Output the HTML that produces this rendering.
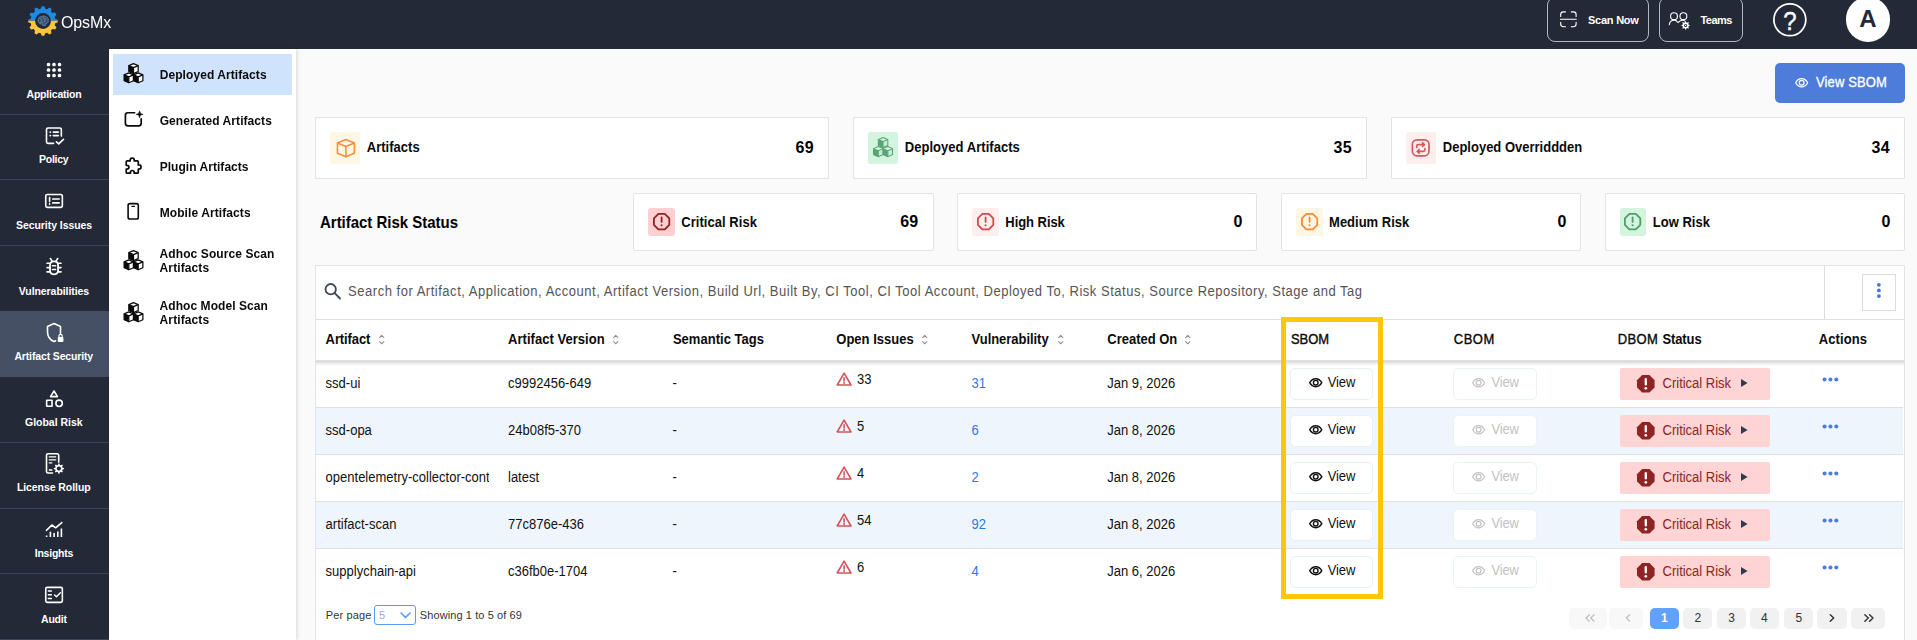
<!DOCTYPE html>
<html lang="en">
<head>
<meta charset="utf-8">
<title>OpsMx - Deployed Artifacts</title>
<style>
*{box-sizing:border-box;margin:0;padding:0}
html,body{width:1917px;height:640px;overflow:hidden}
body{background:#fafafa;font-family:"Liberation Sans", Arial, sans-serif;position:relative}
.b,.t,.ic{position:absolute;display:block}
.t{line-height:30px;white-space:pre}
.ic{overflow:visible}
#hdr{position:absolute;left:0;top:0;width:1917px;height:49px;background:#242937;overflow:hidden}
#nav{position:absolute;left:0;top:0;width:109px;height:640px}
#nav:before{content:"";position:absolute;left:0;top:49px;width:109px;height:591px;background:#242937}
#side{position:absolute;left:0;top:0;width:0;height:0}
#side:before{content:"";position:absolute;left:109px;top:49px;width:187px;height:591px;background:#fff;box-shadow:1px 0 4px rgba(0,0,0,.14)}
#main{position:absolute;left:0;top:0;width:0;height:0}
</style>
</head>
<body>
<header id="hdr">
<svg class="ic" style="left:26.6px;top:5.1px" width="32" height="32" viewBox="0 0 32 32" >
<defs>
<clipPath id="gt">
<rect x="0" y="0" width="32" height="15.7"/>
</clipPath>
<clipPath id="gb">
<rect x="0" y="15.7" width="32" height="17"/>
</clipPath>
</defs>
<path d="M13.75 3.81 L14.70 1.21 L17.30 1.21 L18.25 3.81 L20.15 4.32 L22.27 2.54 L24.53 3.84 L24.04 6.56 L25.44 7.96 L28.16 7.47 L29.46 9.73 L27.68 11.85 L28.19 13.75 L30.79 14.70 L30.79 17.30 L28.19 18.25 L27.68 20.15 L29.46 22.27 L28.16 24.53 L25.44 24.04 L24.04 25.44 L24.53 28.16 L22.27 29.46 L20.15 27.68 L18.25 28.19 L17.30 30.79 L14.70 30.79 L13.75 28.19 L11.85 27.68 L9.73 29.46 L7.47 28.16 L7.96 25.44 L6.56 24.04 L3.84 24.53 L2.54 22.27 L4.32 20.15 L3.81 18.25 L1.21 17.30 L1.21 14.70 L3.81 13.75 L4.32 11.85 L2.54 9.73 L3.84 7.47 L6.56 7.96 L7.96 6.56 L7.47 3.84 L9.73 2.54 L11.85 4.32Z" fill="#1f8ae0" clip-path="url(#gt)"/>
<path d="M13.75 3.81 L14.70 1.21 L17.30 1.21 L18.25 3.81 L20.15 4.32 L22.27 2.54 L24.53 3.84 L24.04 6.56 L25.44 7.96 L28.16 7.47 L29.46 9.73 L27.68 11.85 L28.19 13.75 L30.79 14.70 L30.79 17.30 L28.19 18.25 L27.68 20.15 L29.46 22.27 L28.16 24.53 L25.44 24.04 L24.04 25.44 L24.53 28.16 L22.27 29.46 L20.15 27.68 L18.25 28.19 L17.30 30.79 L14.70 30.79 L13.75 28.19 L11.85 27.68 L9.73 29.46 L7.47 28.16 L7.96 25.44 L6.56 24.04 L3.84 24.53 L2.54 22.27 L4.32 20.15 L3.81 18.25 L1.21 17.30 L1.21 14.70 L3.81 13.75 L4.32 11.85 L2.54 9.73 L3.84 7.47 L6.56 7.96 L7.96 6.56 L7.47 3.84 L9.73 2.54 L11.85 4.32Z" fill="#fcc43f" clip-path="url(#gb)"/>
<circle cx="16" cy="16" r="7.9" fill="#242937"/>
<g fill="none" stroke="#7fb2dc" stroke-width="0.8" stroke-linecap="round" stroke-dasharray="1.1 1" opacity=".85">
<path d="M11.2 16.2c-.6-2.6 1.2-4.6 3.4-4.6 1-.9 2.9-.8 3.8.2 2 .1 3.2 1.800 2.800 3.600.5 1.600-.6 3-2.200 3l-.4 2h-2.800l-.2-1.400c-2.200.3-3.900-.8-4.400-2.800z" fill="#4f86b8" fill-opacity=".5"/>
<path d="M13.200 13.600c1 .2 1.600 1 1.500 2M16 12.200c.1 1 .9 1.700 2 1.600M18.800 14.800c-1 .3-1.500 1.200-1.200 2.200M13.600 17.200c.9-.5 2-.2 2.500.7"/>
</g>
</svg>
<div class="t " style="left:61.00px;top:8.00px;font-size:16.0px;color:#fff;will-change:transform;transform:scaleY(1.07);transform-origin:0 20.00px;letter-spacing:-0.125px;">OpsMx</div>
<div class="b btn" style="left:1547px;top:-3px;width:102px;height:45px;border:1px solid #b4b7be;border-radius:8px">
</div>
<svg class="ic" style="left:1555px;top:8px" width="26" height="24" viewBox="1555 8 26 24" >
<path d="M1560.700 16.400v-1.900a2.600 2.600 0 0 1 2.600-2.600h2.200M1571.300 11.900h2.200a2.600 2.600 0 0 1 2.600 2.600v1.900M1576.100 22.200v1.900a2.600 2.600 0 0 1-2.600 2.600h-2.200M1565.500 26.700h-2.200a2.600 2.600 0 0 1-2.600-2.600v-1.900M1560.500 19.300h15.800" fill="none" stroke="#fff" stroke-width="1.100" stroke-linecap="round"/>
</svg>
<div class="t " style="left:1588.00px;top:5.00px;font-size:11.0px;color:#fff;transform:scaleY(1.07);transform-origin:0 19.00px;font-weight:700;letter-spacing:-0.243px;">Scan Now</div>
<div class="b btn" style="left:1659px;top:-3px;width:84px;height:45px;border:1px solid #b4b7be;border-radius:8px">
</div>
<svg class="ic" style="left:1665px;top:8px" width="28" height="24" viewBox="1665 8 28 24" >
<g fill="none" stroke="#fff" stroke-width="1.100" stroke-linecap="round">
<circle cx="1674" cy="16.200" r="3.450"/>
<circle cx="1683.400" cy="16.200" r="3.450"/>
<path d="M1669.300 24.800c.3-2.700 2.200-4.600 4.700-4.600 1.700 0 3.100.8 3.900 2.200"/>
<path d="M1678.600 22.200c.9-1.200 2.200-2 3.900-2 .8 0 1.500.2 2.100.5"/>
</g>
<path d="M1684.85 22.38 L1685.14 21.23 L1686.06 21.23 L1686.35 22.38 L1687.20 22.74 L1688.23 22.12 L1688.88 22.77 L1688.26 23.80 L1688.62 24.65 L1689.77 24.94 L1689.77 25.86 L1688.62 26.15 L1688.26 27.00 L1688.88 28.03 L1688.23 28.68 L1687.20 28.06 L1686.35 28.42 L1686.06 29.57 L1685.14 29.57 L1684.85 28.42 L1684.00 28.06 L1682.97 28.68 L1682.32 28.03 L1682.94 27.00 L1682.58 26.15 L1681.43 25.86 L1681.43 24.94 L1682.58 24.65 L1682.94 23.80 L1682.32 22.77 L1682.97 22.12 L1684.00 22.74Z" fill="#fff"/>
<circle cx="1685.6" cy="25.4" r="1.50" fill="#242937"/>
<circle cx="1685.600" cy="25.400" r="0.700" fill="#fff"/>
</svg>
<div class="t " style="left:1700.40px;top:5.00px;font-size:11.0px;color:#fff;transform:scaleY(1.07);transform-origin:0 19.00px;font-weight:700;letter-spacing:-0.500px;">Teams</div>
<svg class="ic" style="left:1770px;top:0px" width="40" height="40" viewBox="1770 0 40 40" >
<circle cx="1789.85" cy="19.75" r="15.95" fill="none" stroke="#fff" stroke-width="1.75"/>
</svg>
<div class="t " style="left:1783.35px;top:7.00px;font-size:24.0px;color:#fff;-webkit-text-stroke:.35px #fff;transform:scaleY(1.1);transform-origin:50% 76%;">?</div>
<div class="b avatar" style="left:1845.6px;top:-2.6px;width:44.4px;height:44.4px;background:#fff;border-radius:50%">
</div>
<div class="t " style="left:1859.20px;top:4.00px;font-size:24.0px;color:#242937;transform:scaleY(1.03);transform-origin:50% 76%;font-weight:700;">A</div>
</header>
<nav id="nav">
<div class="b act" style="left:0px;top:311px;width:109px;height:66px;background:#465065">
</div>
<div class="b dv" style="left:0px;top:114px;width:109px;height:1px;background:#3b4559">
</div>
<div class="b dv" style="left:0px;top:179px;width:109px;height:1px;background:#3b4559">
</div>
<div class="b dv" style="left:0px;top:245px;width:109px;height:1px;background:#3b4559">
</div>
<div class="b dv" style="left:0px;top:442px;width:109px;height:1px;background:#3b4559">
</div>
<div class="b dv" style="left:0px;top:508px;width:109px;height:1px;background:#3b4559">
</div>
<div class="b dv" style="left:0px;top:573px;width:109px;height:1px;background:#3b4559">
</div>
<div class="b dv" style="left:0px;top:639px;width:109px;height:1px;background:#3b4559">
</div>
<svg class="ic" style="left:44px;top:60px" width="22" height="20" viewBox="44 60 22 20" >
<rect x="46.75" y="62.85" width="3.500" height="3.500" rx="1.500" fill="#fff"/>
<rect x="52.25" y="62.85" width="3.500" height="3.500" rx="1.500" fill="#fff"/>
<rect x="57.75" y="62.85" width="3.500" height="3.500" rx="1.500" fill="#fff"/>
<rect x="46.75" y="68.30" width="3.500" height="3.500" rx="1.500" fill="#fff"/>
<rect x="52.25" y="68.30" width="3.500" height="3.500" rx="1.500" fill="#fff"/>
<rect x="57.75" y="68.30" width="3.500" height="3.500" rx="1.500" fill="#fff"/>
<rect x="46.75" y="73.75" width="3.500" height="3.500" rx="1.500" fill="#fff"/>
<rect x="52.25" y="73.75" width="3.500" height="3.500" rx="1.500" fill="#fff"/>
<rect x="57.75" y="73.75" width="3.500" height="3.500" rx="1.500" fill="#fff"/>
</svg>
<div class="t " style="left:26.50px;top:79.00px;font-size:10.5px;color:#fff;transform:scaleY(1.07);transform-origin:0 19.00px;font-weight:700;letter-spacing:-0.200px;">Application</div>
<svg class="ic" style="left:44px;top:125px" width="22" height="22" viewBox="44 125 22 22" >
<g fill="none" stroke="#fff" stroke-width="1.6" stroke-linecap="round" stroke-linejoin="round">
<path d="M53.600 143.350H48a1.500 1.500 0 0 1-1.500-1.500V129.500A1.500 1.500 0 0 1 48 128h11.850a1.500 1.500 0 0 1 1.500 1.500v6.600"/>
<path d="M53.300 132.100h5M53.300 135.600h5"/>
<path d="M56.400 141.800l2.300 2 4.800-4.500"/>
</g>
<circle cx="50.300" cy="132.100" r="0.950" fill="#fff"/>
<circle cx="50.300" cy="135.600" r="0.950" fill="#fff"/>
</svg>
<div class="t " style="left:39.00px;top:144.00px;font-size:10.5px;color:#fff;transform:scaleY(1.07);transform-origin:0 19.00px;font-weight:700;letter-spacing:-0.250px;">Policy</div>
<svg class="ic" style="left:43px;top:191px" width="24" height="20" viewBox="43 191 24 20" >
<g fill="none" stroke="#fff" stroke-width="1.6" stroke-linecap="round" stroke-linejoin="round">
<rect x="45.750" y="194.500" width="16.600" height="12.850" rx="1.500"/>
<path d="M52.700 199h6.500M52.700 202.900h6.500M49.600 197.600v4"/>
</g>
<circle cx="49.600" cy="204" r="0.900" fill="#fff"/>
</svg>
<div class="t " style="left:16.00px;top:210.00px;font-size:10.5px;color:#fff;transform:scaleY(1.07);transform-origin:0 19.00px;font-weight:700;letter-spacing:-0.064px;">Security Issues</div>
<svg class="ic" style="left:44px;top:256px" width="20" height="21" viewBox="44 256 20 21" >
<g fill="none" stroke="#fff" stroke-width="1.6" stroke-linecap="round" stroke-linejoin="round">
<path d="M54.050 261.300c2.500 0 4.050 1.700 4.050 4v4.700c0 2.500-1.650 4.300-4.050 4.300s-4.050-1.800-4.050-4.300v-4.700c0-2.300 1.550-4 4.050-4z" stroke-width="1.800"/>
<path d="M50.400 258.500l1.700 2.600M57.700 258.500l-1.700 2.600M47 263.200h2.900M47 267.600h2.900M47 271.900h2.900M58.100 263.200H61M58.100 267.600H61M58.100 271.900H61M52.500 265.700h3.100M52.500 269.500h3.100"/>
</g>
</svg>
<div class="t " style="left:18.75px;top:276.00px;font-size:10.5px;color:#fff;transform:scaleY(1.07);transform-origin:0 19.00px;font-weight:700;letter-spacing:-0.071px;">Vulnerabilities</div>
<svg class="ic" style="left:44px;top:320px" width="22" height="24" viewBox="44 320 22 24" >
<g fill="none" stroke="#fff" stroke-width="1.6" stroke-linecap="round" stroke-linejoin="round">
<path d="M60.500 333.200v-6.700l-6.500-3-6.500 3v5.600c0 4.300 2.600 7.900 6.500 9.500.6-.2 1.100-.5 1.600-.8"/>
<path d="M59 337v-1.100a1.600 1.600 0 0 1 3.200 0v1.100" stroke-width="1.200"/>
</g>
<rect x="57.800" y="337" width="5.600" height="5" rx=".8" fill="#fff"/>
</svg>
<div class="t " style="left:14.40px;top:341.00px;font-size:10.5px;color:#fff;transform:scaleY(1.07);transform-origin:0 19.00px;font-weight:700;letter-spacing:-0.144px;">Artifact Security</div>
<svg class="ic" style="left:44px;top:388px" width="22" height="21" viewBox="44 388 22 21" >
<g fill="none" stroke="#fff" stroke-width="1.6" stroke-linecap="round" stroke-linejoin="round">
<path d="M54 391l3.500 5.600h-7z"/>
<rect x="46.650" y="400.300" width="5.400" height="5.900" rx=".3"/>
<circle cx="59.100" cy="403.300" r="3.200"/>
</g>
</svg>
<div class="t " style="left:25.00px;top:407.00px;font-size:10.5px;color:#fff;transform:scaleY(1.07);transform-origin:0 19.00px;font-weight:700;letter-spacing:-0.010px;">Global Risk</div>
<svg class="ic" style="left:44px;top:451px" width="22" height="25" viewBox="44 451 22 25" >
<g fill="none" stroke="#fff" stroke-width="1.6" stroke-linecap="round" stroke-linejoin="round">
<path d="M52.500 473h-4.500a1.500 1.500 0 0 1-1.500-1.500v-16.200a1.500 1.500 0 0 1 1.500-1.500h9.200a1.500 1.500 0 0 1 1.500 1.500v7"/>
<path d="M48.800 456.900h7.400M48.800 459.800h7.400M48.800 462.900h3.500M48.800 470h3.500" stroke-width="1.300" stroke-linecap="butt"/>
</g>
<path d="M57.99 464.94 L58.34 463.53 L59.46 463.53 L59.81 464.94 L60.85 465.37 L62.09 464.62 L62.88 465.41 L62.13 466.65 L62.56 467.69 L63.97 468.04 L63.97 469.16 L62.56 469.51 L62.13 470.55 L62.88 471.79 L62.09 472.58 L60.85 471.83 L59.81 472.26 L59.46 473.67 L58.34 473.67 L57.99 472.26 L56.95 471.83 L55.71 472.58 L54.92 471.79 L55.67 470.55 L55.24 469.51 L53.83 469.16 L53.83 468.04 L55.24 467.69 L55.67 466.65 L54.92 465.41 L55.71 464.62 L56.95 465.37Z" fill="#fff"/>
<circle cx="58.9" cy="468.6" r="2.10" fill="#242937"/>
</svg>
<div class="t " style="left:16.90px;top:472.00px;font-size:10.5px;color:#fff;transform:scaleY(1.07);transform-origin:0 19.00px;font-weight:700;letter-spacing:-0.069px;">License Rollup</div>
<svg class="ic" style="left:44px;top:520px" width="20" height="19" viewBox="44 520 20 19" >
<g fill="none" stroke="#fff" stroke-width="1.6" stroke-linecap="round" stroke-linejoin="round">
<path d="M46.400 530.300l5.500-5.300 3.700 2.800 6.200-5.200"/>
<path d="M46.600 535.600v1.300M50.400 531.800v5.100M54.100 533v3.900M57.800 531.400v5.500M61.400 528.600v8.300" stroke-linecap="butt"/>
</g>
</svg>
<div class="t " style="left:34.75px;top:538.00px;font-size:10.5px;color:#fff;transform:scaleY(1.07);transform-origin:0 19.00px;font-weight:700;letter-spacing:-0.236px;">Insights</div>
<svg class="ic" style="left:43px;top:584px" width="24" height="21" viewBox="43 584 24 21" >
<g fill="none" stroke="#fff" stroke-width="1.6" stroke-linecap="round" stroke-linejoin="round">
<rect x="45.750" y="587.350" width="16.600" height="15" rx="1.500"/>
<path d="M48.300 591h3.100M48.300 594.750h3.100M48.300 598.500h3.100M54.600 595l1.900 1.800 3.900-4" stroke-width="1.400"/>
</g>
</svg>
<div class="t " style="left:41.00px;top:604.00px;font-size:10.5px;color:#fff;transform:scaleY(1.07);transform-origin:0 19.00px;font-weight:700;letter-spacing:-0.188px;">Audit</div>
</nav>
<aside id="side">
<div class="b sact" style="left:113px;top:54px;width:179px;height:41px;background:#d0e3fd">
</div>
<svg class="ic" style="left:120.5px;top:61px" width="25" height="25" viewBox="120.5 61 25 25" >
<polygon points="133.00,63.62 137.69,65.64 133.00,67.66 128.31,65.64" fill="#fff"/>
<polygon points="128.31,65.64 133.00,67.66 133.00,73.56 128.31,71.55" fill="#0b0b0b"/>
<polygon points="133.00,67.66 137.69,65.64 137.69,71.55 133.00,73.56" fill="#fff"/>
<polygon points="133.00,63.62 137.69,65.64 137.69,71.55 133.00,73.56 128.31,71.55 128.31,65.64" fill="none" stroke="#0b0b0b" stroke-width="1.25" stroke-linejoin="round"/>
<path d="M128.31 65.64L133.00 67.66L137.69 65.64M133.00 67.66L133.00 73.56" fill="none" stroke="#0b0b0b" stroke-width="1.25" stroke-linejoin="round"/>
<polygon points="128.31,72.84 133.00,74.85 128.31,76.87 123.62,74.85" fill="#fff"/>
<polygon points="123.62,74.85 128.31,76.87 128.31,82.78 123.62,80.76" fill="#0b0b0b"/>
<polygon points="128.31,76.87 133.00,74.85 133.00,80.76 128.31,82.78" fill="#fff"/>
<polygon points="128.31,72.84 133.00,74.85 133.00,80.76 128.31,82.78 123.62,80.76 123.62,74.85" fill="none" stroke="#0b0b0b" stroke-width="1.25" stroke-linejoin="round"/>
<path d="M123.62 74.85L128.31 76.87L133.00 74.85M128.31 76.87L128.31 82.78" fill="none" stroke="#0b0b0b" stroke-width="1.25" stroke-linejoin="round"/>
<polygon points="137.69,72.84 142.38,74.85 137.69,76.87 133.00,74.85" fill="#fff"/>
<polygon points="133.00,74.85 137.69,76.87 137.69,82.78 133.00,80.76" fill="#0b0b0b"/>
<polygon points="137.69,76.87 142.38,74.85 142.38,80.76 137.69,82.78" fill="#fff"/>
<polygon points="137.69,72.84 142.38,74.85 142.38,80.76 137.69,82.78 133.00,80.76 133.00,74.85" fill="none" stroke="#0b0b0b" stroke-width="1.25" stroke-linejoin="round"/>
<path d="M133.00 74.85L137.69 76.87L142.38 74.85M137.69 76.87L137.69 82.78" fill="none" stroke="#0b0b0b" stroke-width="1.25" stroke-linejoin="round"/>
</svg>
<div class="t " style="left:159.70px;top:60.00px;font-size:12.0px;color:#0b0b0b;transform:scaleY(1.07);transform-origin:0 19.00px;font-weight:700;letter-spacing:0.076px;">Deployed Artifacts</div>
<svg class="ic" style="left:122px;top:108px" width="24" height="22" viewBox="122 108 24 22" >
<path d="M134.600 112.750h-6.700a2.500 2.500 0 0 0-2.500 2.500v8.100a2.500 2.500 0 0 0 2.500 2.500h10.800a2.500 2.500 0 0 0 2.500-2.500v-4.600" fill="none" stroke="#0b0b0b" stroke-width="1.700" stroke-linecap="round"/>
<path d="M139.600 110.700c.45 2.300 1.250 3.150 3.550 3.600-2.300.45-3.100 1.300-3.550 3.600-.45-2.300-1.250-3.150-3.550-3.600 2.300-.45 3.100-1.300 3.550-3.600z" fill="#0b0b0b" stroke="#0b0b0b" stroke-width=".5" stroke-linejoin="round"/>
</svg>
<div class="t " style="left:159.70px;top:106.00px;font-size:12.0px;color:#0b0b0b;transform:scaleY(1.07);transform-origin:0 19.00px;font-weight:700;letter-spacing:0.067px;">Generated Artifacts</div>
<svg class="ic" style="left:122px;top:155px" width="24" height="22" viewBox="122 155 24 22" >
<path d="M130.100 160.900v-.6a2.100 2.100 0 0 1 4.200 0v.6h3a1 1 0 0 1 1 1v3h.6a2.150 2.150 0 0 1 0 4.300h-.6v3a1 1 0 0 1-1 1h-3.100v-.8a1.900 1.900 0 0 0-3.800 0v.8h-3.200a1 1 0 0 1-1-1v-3.100h.8a1.900 1.900 0 0 0 0-3.800h-.8v-3.400a1 1 0 0 1 1-1z" fill="none" stroke="#0b0b0b" stroke-width="1.700" stroke-linejoin="round"/>
</svg>
<div class="t " style="left:159.70px;top:152.00px;font-size:12.0px;color:#0b0b0b;transform:scaleY(1.07);transform-origin:0 19.00px;font-weight:700;letter-spacing:0.040px;">Plugin Artifacts</div>
<svg class="ic" style="left:126px;top:201px" width="16" height="21" viewBox="126 201 16 21" >
<rect x="128.100" y="203.600" width="10.200" height="15.400" rx="1.800" fill="none" stroke="#0b0b0b" stroke-width="1.600"/>
<path d="M132 206.400h2.500" stroke="#0b0b0b" stroke-width="1.200" stroke-linecap="round"/>
</svg>
<div class="t " style="left:159.70px;top:198.00px;font-size:12.0px;color:#0b0b0b;transform:scaleY(1.07);transform-origin:0 19.00px;font-weight:700;letter-spacing:0.087px;">Mobile Artifacts</div>
<svg class="ic" style="left:120.5px;top:247.8px" width="25" height="25" viewBox="120.5 247.8 25 25" >
<polygon points="133.00,250.43 137.69,252.44 133.00,254.46 128.31,252.44" fill="#fff"/>
<polygon points="128.31,252.44 133.00,254.46 133.00,260.36 128.31,258.35" fill="#0b0b0b"/>
<polygon points="133.00,254.46 137.69,252.44 137.69,258.35 133.00,260.36" fill="#fff"/>
<polygon points="133.00,250.43 137.69,252.44 137.69,258.35 133.00,260.36 128.31,258.35 128.31,252.44" fill="none" stroke="#0b0b0b" stroke-width="1.25" stroke-linejoin="round"/>
<path d="M128.31 252.44L133.00 254.46L137.69 252.44M133.00 254.46L133.00 260.36" fill="none" stroke="#0b0b0b" stroke-width="1.25" stroke-linejoin="round"/>
<polygon points="128.31,259.64 133.00,261.65 128.31,263.67 123.62,261.65" fill="#fff"/>
<polygon points="123.62,261.65 128.31,263.67 128.31,269.57 123.62,267.56" fill="#0b0b0b"/>
<polygon points="128.31,263.67 133.00,261.65 133.00,267.56 128.31,269.57" fill="#fff"/>
<polygon points="128.31,259.64 133.00,261.65 133.00,267.56 128.31,269.57 123.62,267.56 123.62,261.65" fill="none" stroke="#0b0b0b" stroke-width="1.25" stroke-linejoin="round"/>
<path d="M123.62 261.65L128.31 263.67L133.00 261.65M128.31 263.67L128.31 269.57" fill="none" stroke="#0b0b0b" stroke-width="1.25" stroke-linejoin="round"/>
<polygon points="137.69,259.64 142.38,261.65 137.69,263.67 133.00,261.65" fill="#fff"/>
<polygon points="133.00,261.65 137.69,263.67 137.69,269.57 133.00,267.56" fill="#0b0b0b"/>
<polygon points="137.69,263.67 142.38,261.65 142.38,267.56 137.69,269.57" fill="#fff"/>
<polygon points="137.69,259.64 142.38,261.65 142.38,267.56 137.69,269.57 133.00,267.56 133.00,261.65" fill="none" stroke="#0b0b0b" stroke-width="1.25" stroke-linejoin="round"/>
<path d="M133.00 261.65L137.69 263.67L142.38 261.65M137.69 263.67L137.69 269.57" fill="none" stroke="#0b0b0b" stroke-width="1.25" stroke-linejoin="round"/>
</svg>
<div class="t " style="left:159.60px;top:239.00px;font-size:12.0px;color:#0b0b0b;transform:scaleY(1.07);transform-origin:0 19.00px;font-weight:700;letter-spacing:0.088px;">Adhoc Source Scan</div>
<div class="t " style="left:159.60px;top:253.00px;font-size:12.0px;color:#0b0b0b;transform:scaleY(1.07);transform-origin:0 19.00px;font-weight:700;letter-spacing:0.100px;">Artifacts</div>
<svg class="ic" style="left:120.5px;top:299.9px" width="25" height="25" viewBox="120.5 299.9 25 25" >
<polygon points="133.00,302.52 137.69,304.54 133.00,306.56 128.31,304.54" fill="#fff"/>
<polygon points="128.31,304.54 133.00,306.56 133.00,312.46 128.31,310.45" fill="#0b0b0b"/>
<polygon points="133.00,306.56 137.69,304.54 137.69,310.45 133.00,312.46" fill="#fff"/>
<polygon points="133.00,302.52 137.69,304.54 137.69,310.45 133.00,312.46 128.31,310.45 128.31,304.54" fill="none" stroke="#0b0b0b" stroke-width="1.25" stroke-linejoin="round"/>
<path d="M128.31 304.54L133.00 306.56L137.69 304.54M133.00 306.56L133.00 312.46" fill="none" stroke="#0b0b0b" stroke-width="1.25" stroke-linejoin="round"/>
<polygon points="128.31,311.74 133.00,313.75 128.31,315.77 123.62,313.75" fill="#fff"/>
<polygon points="123.62,313.75 128.31,315.77 128.31,321.67 123.62,319.66" fill="#0b0b0b"/>
<polygon points="128.31,315.77 133.00,313.75 133.00,319.66 128.31,321.67" fill="#fff"/>
<polygon points="128.31,311.74 133.00,313.75 133.00,319.66 128.31,321.67 123.62,319.66 123.62,313.75" fill="none" stroke="#0b0b0b" stroke-width="1.25" stroke-linejoin="round"/>
<path d="M123.62 313.75L128.31 315.77L133.00 313.75M128.31 315.77L128.31 321.67" fill="none" stroke="#0b0b0b" stroke-width="1.25" stroke-linejoin="round"/>
<polygon points="137.69,311.74 142.38,313.75 137.69,315.77 133.00,313.75" fill="#fff"/>
<polygon points="133.00,313.75 137.69,315.77 137.69,321.67 133.00,319.66" fill="#0b0b0b"/>
<polygon points="137.69,315.77 142.38,313.75 142.38,319.66 137.69,321.67" fill="#fff"/>
<polygon points="137.69,311.74 142.38,313.75 142.38,319.66 137.69,321.67 133.00,319.66 133.00,313.75" fill="none" stroke="#0b0b0b" stroke-width="1.25" stroke-linejoin="round"/>
<path d="M133.00 313.75L137.69 315.77L142.38 313.75M137.69 315.77L137.69 321.67" fill="none" stroke="#0b0b0b" stroke-width="1.25" stroke-linejoin="round"/>
</svg>
<div class="t " style="left:159.60px;top:291.00px;font-size:12.0px;color:#0b0b0b;transform:scaleY(1.07);transform-origin:0 19.00px;font-weight:700;letter-spacing:0.060px;">Adhoc Model Scan</div>
<div class="t " style="left:159.60px;top:305.00px;font-size:12.0px;color:#0b0b0b;transform:scaleY(1.07);transform-origin:0 19.00px;font-weight:700;letter-spacing:0.100px;">Artifacts</div>
</aside>
<main id="main">
<div class="b vsbom" style="left:1775px;top:63px;width:130px;height:40px;background:#4d7cdb;border-radius:5px">
</div>
<svg class="ic" style="left:1794px;top:76.7px" width="15.3" height="11.4" viewBox="1794 76.7 15.3 11.4" >
<path d="M1795.60 82.40C1798.62 76.93 1804.68 76.93 1807.70 82.40C1804.68 87.87 1798.62 87.87 1795.60 82.40Z" fill="none" stroke="#fff" stroke-width="1.2" stroke-linejoin="round"/>
<circle cx="1801.65" cy="82.40" r="2.38" fill="none" stroke="#fff" stroke-width="1.2"/>
</svg>
<div class="t " style="left:1816.00px;top:68.00px;font-size:13.0px;color:#fff;-webkit-text-stroke:.3px #fff;transform:scaleY(1.07);transform-origin:0 19.00px;letter-spacing:0.125px;">View SBOM</div>
<div class="b card" style="left:315px;top:117px;width:514px;height:62px;background:#fff;border:1px solid #e1e4e8">
</div>
<div class="b tile" style="left:330px;top:132px;width:30px;height:32px;background:#fff7e6;border-radius:2.500px">
</div>
<svg class="ic" style="left:330px;top:132px" width="30" height="32" viewBox="330 132 30 32" >
<polygon points="345.90,139.60 354.35,143.10 345.90,146.60 337.45,143.10" fill="none"/>
<polygon points="337.45,143.10 345.90,146.60 345.90,156.80 337.45,153.30" fill="none"/>
<polygon points="345.90,146.60 354.35,143.10 354.35,153.30 345.90,156.80" fill="none"/>
<polygon points="345.90,139.60 354.35,143.10 354.35,153.30 345.90,156.80 337.45,153.30 337.45,143.10" fill="none" stroke="#fa8f40" stroke-width="1.6" stroke-linejoin="round"/>
<path d="M337.45 143.10L345.90 146.60L354.35 143.10M345.90 146.60L345.90 156.80" fill="none" stroke="#fa8f40" stroke-width="1.6" stroke-linejoin="round"/>
</svg>
<div class="t " style="left:366.80px;top:133.00px;font-size:13.0px;color:#0b0b0b;transform:scaleY(1.07);transform-origin:0 19.00px;font-weight:700;letter-spacing:0.012px;">Artifacts</div>
<div class="t " style="left:795.60px;top:133.00px;font-size:16.0px;color:#000;transform:scaleY(1.07);transform-origin:0 20.00px;font-weight:700;letter-spacing:0.200px;">69</div>
<div class="b card" style="left:853px;top:117px;width:514px;height:62px;background:#fff;border:1px solid #e1e4e8">
</div>
<div class="b tile" style="left:868px;top:132px;width:30px;height:32px;background:#d4f4e0;border-radius:2.500px">
</div>
<svg class="ic" style="left:868px;top:132px" width="30" height="32" viewBox="868 132 30 32" >
<polygon points="883.05,137.43 887.81,139.47 883.05,141.52 878.29,139.47" fill="#dcf5e5"/>
<polygon points="878.29,139.47 883.05,141.52 883.05,147.52 878.29,145.47" fill="#58a574"/>
<polygon points="883.05,141.52 887.81,139.47 887.81,145.47 883.05,147.52" fill="#c9ebd5"/>
<polygon points="883.05,137.43 887.81,139.47 887.81,145.47 883.05,147.52 878.29,145.47 878.29,139.47" fill="none" stroke="#58a574" stroke-width="1.05" stroke-linejoin="round"/>
<path d="M878.29 139.47L883.05 141.52L887.81 139.47M883.05 141.52L883.05 147.52" fill="none" stroke="#58a574" stroke-width="1.05" stroke-linejoin="round"/>
<polygon points="878.29,146.58 883.05,148.63 878.29,150.67 873.52,148.63" fill="#dcf5e5"/>
<polygon points="873.52,148.63 878.29,150.67 878.29,156.68 873.52,154.63" fill="#58a574"/>
<polygon points="878.29,150.67 883.05,148.63 883.05,154.63 878.29,156.68" fill="#c9ebd5"/>
<polygon points="878.29,146.58 883.05,148.63 883.05,154.63 878.29,156.68 873.52,154.63 873.52,148.63" fill="none" stroke="#58a574" stroke-width="1.05" stroke-linejoin="round"/>
<path d="M873.52 148.63L878.29 150.67L883.05 148.63M878.29 150.67L878.29 156.68" fill="none" stroke="#58a574" stroke-width="1.05" stroke-linejoin="round"/>
<polygon points="887.81,146.58 892.58,148.63 887.81,150.67 883.05,148.63" fill="#dcf5e5"/>
<polygon points="883.05,148.63 887.81,150.67 887.81,156.68 883.05,154.63" fill="#58a574"/>
<polygon points="887.81,150.67 892.58,148.63 892.58,154.63 887.81,156.68" fill="#c9ebd5"/>
<polygon points="887.81,146.58 892.58,148.63 892.58,154.63 887.81,156.68 883.05,154.63 883.05,148.63" fill="none" stroke="#58a574" stroke-width="1.05" stroke-linejoin="round"/>
<path d="M883.05 148.63L887.81 150.67L892.58 148.63M887.81 150.67L887.81 156.68" fill="none" stroke="#58a574" stroke-width="1.05" stroke-linejoin="round"/>
</svg>
<div class="t " style="left:904.80px;top:133.00px;font-size:13.0px;color:#0b0b0b;transform:scaleY(1.07);transform-origin:0 19.00px;font-weight:700;letter-spacing:0.035px;">Deployed Artifacts</div>
<div class="t " style="left:1333.60px;top:133.00px;font-size:16.0px;color:#000;transform:scaleY(1.07);transform-origin:0 20.00px;font-weight:700;letter-spacing:0.200px;">35</div>
<div class="b card" style="left:1391px;top:117px;width:514px;height:62px;background:#fff;border:1px solid #e1e4e8">
</div>
<div class="b tile" style="left:1406px;top:132px;width:30px;height:32px;background:#ffeeee;border-radius:2.500px">
</div>
<svg class="ic" style="left:1406px;top:132px" width="30" height="32" viewBox="1406 132 30 32" >
<g fill="none" stroke="#d6585d" stroke-width="1.700" stroke-linecap="round" stroke-linejoin="round">
<rect x="1412.40" y="139.80" width="16.600" height="16" rx="4.500"/>
<path d="M1416.70 147.40v-1.200a1.500 1.500 0 0 1 1.500-1.500h6.200M1422.50 142.90l1.800 1.800-1.800 1.800"/>
<path d="M1424.90 148.60v1.200a1.500 1.500 0 0 1-1.500 1.500h-6.200M1419.10 153.10l-1.800-1.800 1.800-1.800"/>
</g>
</svg>
<div class="t " style="left:1442.80px;top:133.00px;font-size:13.0px;color:#0b0b0b;transform:scaleY(1.07);transform-origin:0 19.00px;font-weight:700;">Deployed Overriddden</div>
<div class="t " style="left:1871.60px;top:133.00px;font-size:16.0px;color:#000;transform:scaleY(1.07);transform-origin:0 20.00px;font-weight:700;letter-spacing:0.200px;">34</div>
<div class="t " style="left:320.00px;top:208.00px;font-size:15.0px;color:#000;transform:scaleY(1.07);transform-origin:0 20.00px;font-weight:700;letter-spacing:-0.021px;">Artifact Risk Status</div>
<div class="b card" style="left:633px;top:193px;width:301px;height:58px;background:#fff;border:1px solid #e1e4e8;border-radius:2px">
</div>
<div class="b tile" style="left:648px;top:208px;width:27px;height:28px;background:#ffcfd2;border-radius:3px">
</div>
<svg class="ic" style="left:651.9px;top:212.1px" width="19.2" height="19.2" viewBox="651.9 212.1 19.2 19.2" >
<polygon points="658.31,214.00 664.69,214.00 669.20,218.51 669.20,224.89 664.69,229.40 658.31,229.40 653.80,224.89 653.80,218.51" fill="none" stroke="#8f2424" stroke-width="1.800" stroke-linejoin="round"/>
<path d="M661.50 217.60v4.400" stroke="#8f2424" stroke-width="1.800" stroke-linecap="round"/>
<circle cx="661.50" cy="225.30" r="1.050" fill="#8f2424"/>
</svg>
<div class="t " style="left:681.30px;top:208.00px;font-size:13.0px;color:#0b0b0b;transform:scaleY(1.07);transform-origin:0 19.00px;font-weight:700;letter-spacing:0.042px;">Critical Risk</div>
<div class="t " style="left:900.20px;top:207.00px;font-size:16.0px;color:#000;transform:scaleY(1.07);transform-origin:0 20.00px;font-weight:700;letter-spacing:0.200px;">69</div>
<div class="b card" style="left:957px;top:193px;width:300px;height:58px;background:#fff;border:1px solid #e1e4e8;border-radius:2px">
</div>
<div class="b tile" style="left:972px;top:208px;width:27px;height:28px;background:#ffeeee;border-radius:3px">
</div>
<svg class="ic" style="left:975.9px;top:212.1px" width="19.2" height="19.2" viewBox="975.9 212.1 19.2 19.2" >
<polygon points="982.31,214.00 988.69,214.00 993.20,218.51 993.20,224.89 988.69,229.40 982.31,229.40 977.80,224.89 977.80,218.51" fill="none" stroke="#d1494b" stroke-width="1.800" stroke-linejoin="round"/>
<path d="M985.50 217.60v4.400" stroke="#d1494b" stroke-width="1.800" stroke-linecap="round"/>
<circle cx="985.50" cy="225.30" r="1.050" fill="#d1494b"/>
</svg>
<div class="t " style="left:1005.30px;top:208.00px;font-size:13.0px;color:#0b0b0b;transform:scaleY(1.07);transform-origin:0 19.00px;font-weight:700;letter-spacing:-0.050px;">High Risk</div>
<div class="t " style="left:1233.40px;top:207.00px;font-size:16.0px;color:#000;transform:scaleY(1.07);transform-origin:0 20.00px;font-weight:700;">0</div>
<div class="b card" style="left:1281px;top:193px;width:300px;height:58px;background:#fff;border:1px solid #e1e4e8;border-radius:2px">
</div>
<div class="b tile" style="left:1296px;top:208px;width:26.5px;height:28px;background:#fff7e6;border-radius:3px">
</div>
<svg class="ic" style="left:1299.65px;top:212.1px" width="19.2" height="19.2" viewBox="1299.65 212.1 19.2 19.2" >
<polygon points="1306.06,214.00 1312.44,214.00 1316.95,218.51 1316.95,224.89 1312.44,229.40 1306.06,229.40 1301.55,224.89 1301.55,218.51" fill="none" stroke="#fa8c35" stroke-width="1.800" stroke-linejoin="round"/>
<path d="M1309.25 217.60v4.400" stroke="#fa8c35" stroke-width="1.800" stroke-linecap="round"/>
<circle cx="1309.25" cy="225.30" r="1.050" fill="#fa8c35"/>
</svg>
<div class="t " style="left:1329.05px;top:208.00px;font-size:13.0px;color:#0b0b0b;transform:scaleY(1.07);transform-origin:0 19.00px;font-weight:700;">Medium Risk</div>
<div class="t " style="left:1557.40px;top:207.00px;font-size:16.0px;color:#000;transform:scaleY(1.07);transform-origin:0 20.00px;font-weight:700;">0</div>
<div class="b card" style="left:1605px;top:193px;width:300px;height:58px;background:#fff;border:1px solid #e1e4e8;border-radius:2px">
</div>
<div class="b tile" style="left:1620px;top:208px;width:26px;height:28px;background:#d4f4e0;border-radius:3px">
</div>
<svg class="ic" style="left:1623.4px;top:212.1px" width="19.2" height="19.2" viewBox="1623.4 212.1 19.2 19.2" >
<polygon points="1629.81,214.00 1636.19,214.00 1640.70,218.51 1640.70,224.89 1636.19,229.40 1629.81,229.40 1625.30,224.89 1625.30,218.51" fill="none" stroke="#4f9e6a" stroke-width="1.800" stroke-linejoin="round"/>
<path d="M1633.00 217.60v4.400" stroke="#4f9e6a" stroke-width="1.800" stroke-linecap="round"/>
<circle cx="1633.00" cy="225.30" r="1.050" fill="#4f9e6a"/>
</svg>
<div class="t " style="left:1652.80px;top:208.00px;font-size:13.0px;color:#0b0b0b;transform:scaleY(1.07);transform-origin:0 19.00px;font-weight:700;">Low Risk</div>
<div class="t " style="left:1881.40px;top:207.00px;font-size:16.0px;color:#000;transform:scaleY(1.07);transform-origin:0 20.00px;font-weight:700;">0</div>
<div class="b tbl" style="left:315px;top:265px;width:1590px;height:376px;background:#fff;border:1px solid #e1e4e8;border-bottom:0">
</div>
<div class="b ln" style="left:316px;top:319px;width:1588px;height:1px;background:#e0e0e0">
</div>
<div class="b ln" style="left:1824px;top:266px;width:1px;height:53px;background:#dcdcdc">
</div>
<div class="b kebab" style="left:1862px;top:274px;width:34px;height:37px;border:1px solid #dcdcdc;background:#fff">
</div>
<svg class="ic" style="left:1874px;top:280px" width="10" height="21" viewBox="1874 280 10 21" >
<circle cx="1878.9" cy="284.8" r="1.9" fill="#4377e0"/>
<circle cx="1878.9" cy="290.45" r="1.9" fill="#4377e0"/>
<circle cx="1878.9" cy="296.1" r="1.9" fill="#4377e0"/>
</svg>
<svg class="ic" style="left:322px;top:280px" width="22" height="22" viewBox="322 280 22 22" >
<circle cx="330.700" cy="289.200" r="5.200" fill="none" stroke="#3c4858" stroke-width="1.800"/>
<path d="M334.700 293.200l5.300 5.300" stroke="#3c4858" stroke-width="1.900" stroke-linecap="round"/>
</svg>
<div class="t " style="left:348.10px;top:277.00px;font-size:13.0px;color:#555;transform:scaleY(1.07);transform-origin:0 19.00px;letter-spacing:0.518px;">Search for Artifact, Application, Account, Artifact Version, Build Url, Built By, CI Tool, CI Tool Account, Deployed To, Risk Status, Source Repository, Stage and Tag</div>
<div class="b row" style="left:316px;top:361px;width:1587px;height:47px;background:#fff;border-bottom:1px solid #e0e0e0">
</div>
<div class="b row" style="left:316px;top:408px;width:1587px;height:47px;background:#eff5fd;border-bottom:1px solid #e0e0e0">
</div>
<div class="b row" style="left:316px;top:455px;width:1587px;height:47px;background:#fff;border-bottom:1px solid #e0e0e0">
</div>
<div class="b row" style="left:316px;top:502px;width:1587px;height:47px;background:#eff5fd;border-bottom:1px solid #e0e0e0">
</div>
<div class="b row" style="left:316px;top:549px;width:1587px;height:47px;background:#fff;">
</div>
<div class="b thead" style="left:316px;top:320px;width:1588px;height:40px;background:#fff">
</div>
<div class="b shadow" style="left:316px;top:360px;width:1588px;height:6px;background:linear-gradient(to bottom,rgba(0,0,0,.1) 0,rgba(0,0,0,.155) 22%,rgba(0,0,0,.07) 55%,rgba(0,0,0,0) 100%)">
</div>
<div class="t " style="left:325.60px;top:325.00px;font-size:13.0px;color:#0b0b0b;transform:scaleY(1.07);transform-origin:0 19.00px;font-weight:700;letter-spacing:-0.100px;">Artifact</div>
<svg class="ic" style="left:377.9px;top:333px" width="8" height="13" viewBox="377.9 333 8 13" >
<path d="M379.55 337.60l2.100-2.200 2.100 2.200M379.55 341.60l2.100 2.200 2.100-2.200" fill="none" stroke="#8e8e8e" stroke-width="1.050" stroke-linecap="round" stroke-linejoin="round"/>
</svg>
<div class="t " style="left:508.00px;top:325.00px;font-size:13.0px;color:#0b0b0b;transform:scaleY(1.07);transform-origin:0 19.00px;font-weight:700;letter-spacing:0.040px;">Artifact Version</div>
<svg class="ic" style="left:611.6px;top:333px" width="8" height="13" viewBox="611.6 333 8 13" >
<path d="M613.25 337.60l2.100-2.200 2.100 2.200M613.25 341.60l2.100 2.200 2.100-2.200" fill="none" stroke="#8e8e8e" stroke-width="1.050" stroke-linecap="round" stroke-linejoin="round"/>
</svg>
<div class="t " style="left:672.90px;top:325.00px;font-size:13.0px;color:#0b0b0b;transform:scaleY(1.07);transform-origin:0 19.00px;font-weight:700;letter-spacing:0.025px;">Semantic Tags</div>
<div class="t " style="left:836.30px;top:325.00px;font-size:13.0px;color:#0b0b0b;transform:scaleY(1.07);transform-origin:0 19.00px;font-weight:700;">Open Issues</div>
<svg class="ic" style="left:920.6px;top:333px" width="8" height="13" viewBox="920.6 333 8 13" >
<path d="M922.25 337.60l2.100-2.200 2.100 2.200M922.25 341.60l2.100 2.200 2.100-2.200" fill="none" stroke="#8e8e8e" stroke-width="1.050" stroke-linecap="round" stroke-linejoin="round"/>
</svg>
<div class="t " style="left:971.60px;top:325.00px;font-size:13.0px;color:#0b0b0b;transform:scaleY(1.07);transform-origin:0 19.00px;font-weight:700;letter-spacing:-0.042px;">Vulnerability</div>
<svg class="ic" style="left:1056.6px;top:333px" width="8" height="13" viewBox="1056.6 333 8 13" >
<path d="M1058.25 337.60l2.100-2.200 2.100 2.200M1058.25 341.60l2.100 2.200 2.100-2.200" fill="none" stroke="#8e8e8e" stroke-width="1.050" stroke-linecap="round" stroke-linejoin="round"/>
</svg>
<div class="t " style="left:1107.30px;top:325.00px;font-size:13.0px;color:#0b0b0b;transform:scaleY(1.07);transform-origin:0 19.00px;font-weight:700;letter-spacing:-0.011px;">Created On</div>
<svg class="ic" style="left:1184.2px;top:333px" width="8" height="13" viewBox="1184.2 333 8 13" >
<path d="M1185.85 337.60l2.100-2.200 2.100 2.200M1185.85 341.60l2.100 2.200 2.100-2.200" fill="none" stroke="#8e8e8e" stroke-width="1.050" stroke-linecap="round" stroke-linejoin="round"/>
</svg>
<div class="t " style="left:1291.00px;top:325.00px;font-size:13.0px;color:#0b0b0b;-webkit-text-stroke:.35px #0b0b0b;transform:scaleY(1.07);transform-origin:0 19.00px;letter-spacing:-0.100px;">SBOM</div>
<div class="t " style="left:1453.80px;top:325.00px;font-size:13.0px;color:#0b0b0b;-webkit-text-stroke:.35px #0b0b0b;transform:scaleY(1.07);transform-origin:0 19.00px;letter-spacing:0.500px;">CBOM</div>
<div class="t " style="left:1617.80px;top:325.00px;font-size:13.0px;color:#0b0b0b;-webkit-text-stroke:.35px #0b0b0b;transform:scaleY(1.07);transform-origin:0 19.00px;letter-spacing:0.367px;">DBOM</div>
<div class="t " style="left:1662.40px;top:325.00px;font-size:13.0px;color:#0b0b0b;transform:scaleY(1.07);transform-origin:0 19.00px;font-weight:700;letter-spacing:-0.100px;">Status</div>
<div class="t " style="left:1818.80px;top:325.00px;font-size:13.0px;color:#0b0b0b;transform:scaleY(1.07);transform-origin:0 19.00px;font-weight:700;letter-spacing:0.100px;">Actions</div>
<div class="t " style="left:325.60px;top:369.00px;font-size:13.0px;color:#111;transform:scaleY(1.07);transform-origin:0 19.00px;">ssd-ui</div>
<div class="t " style="left:508.00px;top:369.00px;font-size:13.0px;color:#111;transform:scaleY(1.07);transform-origin:0 19.00px;">c9992456-649</div>
<div class="t " style="left:672.40px;top:369.00px;font-size:13.0px;color:#111;transform:scaleY(1.07);transform-origin:0 19.00px;">-</div>
<svg class="ic" style="left:835.3px;top:371px" width="19" height="16" viewBox="835.3 371 19 16" >
<path d="M844.40 373.20L851.30 385.00H837.50Z" fill="none" stroke="#d4545c" stroke-width="1.600" stroke-linejoin="round"/>
<path d="M844.40 377.80v3.300" stroke="#d4545c" stroke-width="1.600" stroke-linecap="round"/>
<circle cx="844.40" cy="383.00" r=".950" fill="#d4545c"/>
</svg>
<div class="t " style="left:857.00px;top:365.00px;font-size:13.0px;color:#111;transform:scaleY(1.07);transform-origin:0 19.00px;">33</div>
<div class="t " style="left:971.60px;top:369.00px;font-size:13.0px;color:#1f7cf0;transform:scaleY(1.07);transform-origin:0 19.00px;">31</div>
<div class="t " style="left:1107.30px;top:369.00px;font-size:13.0px;color:#111;transform:scaleY(1.07);transform-origin:0 19.00px;">Jan 9, 2026</div>
<div class="b vbtn" style="left:1290px;top:368px;width:83px;height:32px;background:#fff;border:1px solid #e8f0f4;border-radius:5px">
</div>
<svg class="ic" style="left:1308px;top:376.9px" width="15.5" height="11.4" viewBox="1308 376.9 15.5 11.4" >
<path d="M1309.70 382.60C1312.72 377.27 1318.78 377.27 1321.80 382.60C1318.78 387.93 1312.72 387.93 1309.70 382.60Z" fill="none" stroke="#111" stroke-width="1.4" stroke-linejoin="round"/>
<circle cx="1315.75" cy="382.60" r="2.32" fill="none" stroke="#111" stroke-width="1.4"/>
</svg>
<div class="t " style="left:1327.80px;top:368.00px;font-size:13.0px;color:#111;transform:scaleY(1.07);transform-origin:0 19.00px;letter-spacing:-0.133px;">View</div>
<div class="b vbtn" style="left:1453px;top:368px;width:84px;height:32px;background:#fff;border:1px solid #ebf3f5;border-radius:5px">
</div>
<svg class="ic" style="left:1471.2px;top:376.9px" width="15.3" height="11.4" viewBox="1471.2 376.9 15.3 11.4" >
<path d="M1472.80 382.60C1475.83 377.13 1481.88 377.13 1484.90 382.60C1481.88 388.07 1475.83 388.07 1472.80 382.60Z" fill="none" stroke="#c4c4c4" stroke-width="1.2" stroke-linejoin="round"/>
<circle cx="1478.85" cy="382.60" r="2.38" fill="none" stroke="#c4c4c4" stroke-width="1.2"/>
</svg>
<div class="t " style="left:1491.50px;top:368.00px;font-size:13.0px;color:#c2c2c2;transform:scaleY(1.07);transform-origin:0 19.00px;letter-spacing:-0.167px;">View</div>
<div class="b pill" style="left:1620px;top:368px;width:150px;height:32px;background:#ffd4d4;border-radius:2px">
</div>
<svg class="ic" style="left:1635.9px;top:373.6px" width="19.6" height="19.6" viewBox="1635.9 373.6 19.6 19.6" >
<polygon points="1642.06,374.60 1649.34,374.60 1654.50,379.76 1654.50,387.04 1649.34,392.20 1642.06,392.20 1636.90,387.04 1636.90,379.76" fill="#8f2424"/>
<path d="M1645.70 378.80v5.200" stroke="#fff" stroke-width="2.300" stroke-linecap="round"/>
<circle cx="1645.70" cy="387.90" r="1.350" fill="#fff"/>
</svg>
<div class="t " style="left:1662.60px;top:369.00px;font-size:13.0px;color:#8a2626;transform:scaleY(1.07);transform-origin:0 19.00px;letter-spacing:-0.017px;">Critical Risk</div>
<svg class="ic" style="left:1741px;top:379.4px" width="7" height="8" viewBox="0 0 7 8" >
<path d="M0 0L6.600 4 0 8z" fill="#2f3a4a"/>
</svg>
<svg class="ic" style="left:1820px;top:374px" width="21" height="11" viewBox="1820 374 21 11" >
<circle cx="1824.6" cy="379.5" r="2.05" fill="#4d7cdb"/>
<circle cx="1830.4499999999998" cy="379.5" r="2.05" fill="#4d7cdb"/>
<circle cx="1836.3" cy="379.5" r="2.05" fill="#4d7cdb"/>
</svg>
<div class="t " style="left:325.60px;top:416.00px;font-size:13.0px;color:#111;transform:scaleY(1.07);transform-origin:0 19.00px;">ssd-opa</div>
<div class="t " style="left:508.00px;top:416.00px;font-size:13.0px;color:#111;transform:scaleY(1.07);transform-origin:0 19.00px;">24b08f5-370</div>
<div class="t " style="left:672.40px;top:416.00px;font-size:13.0px;color:#111;transform:scaleY(1.07);transform-origin:0 19.00px;">-</div>
<svg class="ic" style="left:835.3px;top:418px" width="19" height="16" viewBox="835.3 418 19 16" >
<path d="M844.40 420.20L851.30 432.00H837.50Z" fill="none" stroke="#d4545c" stroke-width="1.600" stroke-linejoin="round"/>
<path d="M844.40 424.80v3.300" stroke="#d4545c" stroke-width="1.600" stroke-linecap="round"/>
<circle cx="844.40" cy="430.00" r=".950" fill="#d4545c"/>
</svg>
<div class="t " style="left:857.00px;top:412.00px;font-size:13.0px;color:#111;transform:scaleY(1.07);transform-origin:0 19.00px;">5</div>
<div class="t " style="left:971.60px;top:416.00px;font-size:13.0px;color:#1f7cf0;transform:scaleY(1.07);transform-origin:0 19.00px;">6</div>
<div class="t " style="left:1107.30px;top:416.00px;font-size:13.0px;color:#111;transform:scaleY(1.07);transform-origin:0 19.00px;">Jan 8, 2026</div>
<div class="b vbtn" style="left:1290px;top:415px;width:83px;height:32px;background:#fff;border:1px solid #e8f0f4;border-radius:5px">
</div>
<svg class="ic" style="left:1308px;top:423.9px" width="15.5" height="11.4" viewBox="1308 423.9 15.5 11.4" >
<path d="M1309.70 429.60C1312.72 424.27 1318.78 424.27 1321.80 429.60C1318.78 434.93 1312.72 434.93 1309.70 429.60Z" fill="none" stroke="#111" stroke-width="1.4" stroke-linejoin="round"/>
<circle cx="1315.75" cy="429.60" r="2.32" fill="none" stroke="#111" stroke-width="1.4"/>
</svg>
<div class="t " style="left:1327.80px;top:415.00px;font-size:13.0px;color:#111;transform:scaleY(1.07);transform-origin:0 19.00px;letter-spacing:-0.133px;">View</div>
<div class="b vbtn" style="left:1453px;top:415px;width:84px;height:32px;background:#fff;border:1px solid #ebf3f5;border-radius:5px">
</div>
<svg class="ic" style="left:1471.2px;top:423.9px" width="15.3" height="11.4" viewBox="1471.2 423.9 15.3 11.4" >
<path d="M1472.80 429.60C1475.83 424.13 1481.88 424.13 1484.90 429.60C1481.88 435.07 1475.83 435.07 1472.80 429.60Z" fill="none" stroke="#c4c4c4" stroke-width="1.2" stroke-linejoin="round"/>
<circle cx="1478.85" cy="429.60" r="2.38" fill="none" stroke="#c4c4c4" stroke-width="1.2"/>
</svg>
<div class="t " style="left:1491.50px;top:415.00px;font-size:13.0px;color:#c2c2c2;transform:scaleY(1.07);transform-origin:0 19.00px;letter-spacing:-0.167px;">View</div>
<div class="b pill" style="left:1620px;top:415px;width:150px;height:32px;background:#ffd4d4;border-radius:2px">
</div>
<svg class="ic" style="left:1635.9px;top:420.6px" width="19.6" height="19.6" viewBox="1635.9 420.6 19.6 19.6" >
<polygon points="1642.06,421.60 1649.34,421.60 1654.50,426.76 1654.50,434.04 1649.34,439.20 1642.06,439.20 1636.90,434.04 1636.90,426.76" fill="#8f2424"/>
<path d="M1645.70 425.80v5.200" stroke="#fff" stroke-width="2.300" stroke-linecap="round"/>
<circle cx="1645.70" cy="434.90" r="1.350" fill="#fff"/>
</svg>
<div class="t " style="left:1662.60px;top:416.00px;font-size:13.0px;color:#8a2626;transform:scaleY(1.07);transform-origin:0 19.00px;letter-spacing:-0.017px;">Critical Risk</div>
<svg class="ic" style="left:1741px;top:426.4px" width="7" height="8" viewBox="0 0 7 8" >
<path d="M0 0L6.600 4 0 8z" fill="#2f3a4a"/>
</svg>
<svg class="ic" style="left:1820px;top:421px" width="21" height="11" viewBox="1820 421 21 11" >
<circle cx="1824.6" cy="426.5" r="2.05" fill="#4d7cdb"/>
<circle cx="1830.4499999999998" cy="426.5" r="2.05" fill="#4d7cdb"/>
<circle cx="1836.3" cy="426.5" r="2.05" fill="#4d7cdb"/>
</svg>
<div class="b clip" style="left:320px;top:458px;width:168.600px;height:40px;overflow:hidden">
<div class="t " style="left:5.60px;top:5.00px;font-size:13.0px;color:#111;transform:scaleY(1.07);transform-origin:0 19.00px;">opentelemetry-collector-contrib</div>
</div>
<div class="t " style="left:508.00px;top:463.00px;font-size:13.0px;color:#111;transform:scaleY(1.07);transform-origin:0 19.00px;">latest</div>
<div class="t " style="left:672.40px;top:463.00px;font-size:13.0px;color:#111;transform:scaleY(1.07);transform-origin:0 19.00px;">-</div>
<svg class="ic" style="left:835.3px;top:465px" width="19" height="16" viewBox="835.3 465 19 16" >
<path d="M844.40 467.20L851.30 479.00H837.50Z" fill="none" stroke="#d4545c" stroke-width="1.600" stroke-linejoin="round"/>
<path d="M844.40 471.80v3.300" stroke="#d4545c" stroke-width="1.600" stroke-linecap="round"/>
<circle cx="844.40" cy="477.00" r=".950" fill="#d4545c"/>
</svg>
<div class="t " style="left:857.00px;top:459.00px;font-size:13.0px;color:#111;transform:scaleY(1.07);transform-origin:0 19.00px;">4</div>
<div class="t " style="left:971.60px;top:463.00px;font-size:13.0px;color:#1f7cf0;transform:scaleY(1.07);transform-origin:0 19.00px;">2</div>
<div class="t " style="left:1107.30px;top:463.00px;font-size:13.0px;color:#111;transform:scaleY(1.07);transform-origin:0 19.00px;">Jan 8, 2026</div>
<div class="b vbtn" style="left:1290px;top:462px;width:83px;height:32px;background:#fff;border:1px solid #e8f0f4;border-radius:5px">
</div>
<svg class="ic" style="left:1308px;top:470.9px" width="15.5" height="11.4" viewBox="1308 470.9 15.5 11.4" >
<path d="M1309.70 476.60C1312.72 471.27 1318.78 471.27 1321.80 476.60C1318.78 481.93 1312.72 481.93 1309.70 476.60Z" fill="none" stroke="#111" stroke-width="1.4" stroke-linejoin="round"/>
<circle cx="1315.75" cy="476.60" r="2.32" fill="none" stroke="#111" stroke-width="1.4"/>
</svg>
<div class="t " style="left:1327.80px;top:462.00px;font-size:13.0px;color:#111;transform:scaleY(1.07);transform-origin:0 19.00px;letter-spacing:-0.133px;">View</div>
<div class="b vbtn" style="left:1453px;top:462px;width:84px;height:32px;background:#fff;border:1px solid #ebf3f5;border-radius:5px">
</div>
<svg class="ic" style="left:1471.2px;top:470.9px" width="15.3" height="11.4" viewBox="1471.2 470.9 15.3 11.4" >
<path d="M1472.80 476.60C1475.83 471.13 1481.88 471.13 1484.90 476.60C1481.88 482.07 1475.83 482.07 1472.80 476.60Z" fill="none" stroke="#c4c4c4" stroke-width="1.2" stroke-linejoin="round"/>
<circle cx="1478.85" cy="476.60" r="2.38" fill="none" stroke="#c4c4c4" stroke-width="1.2"/>
</svg>
<div class="t " style="left:1491.50px;top:462.00px;font-size:13.0px;color:#c2c2c2;transform:scaleY(1.07);transform-origin:0 19.00px;letter-spacing:-0.167px;">View</div>
<div class="b pill" style="left:1620px;top:462px;width:150px;height:32px;background:#ffd4d4;border-radius:2px">
</div>
<svg class="ic" style="left:1635.9px;top:467.6px" width="19.6" height="19.6" viewBox="1635.9 467.6 19.6 19.6" >
<polygon points="1642.06,468.60 1649.34,468.60 1654.50,473.76 1654.50,481.04 1649.34,486.20 1642.06,486.20 1636.90,481.04 1636.90,473.76" fill="#8f2424"/>
<path d="M1645.70 472.80v5.200" stroke="#fff" stroke-width="2.300" stroke-linecap="round"/>
<circle cx="1645.70" cy="481.90" r="1.350" fill="#fff"/>
</svg>
<div class="t " style="left:1662.60px;top:463.00px;font-size:13.0px;color:#8a2626;transform:scaleY(1.07);transform-origin:0 19.00px;letter-spacing:-0.017px;">Critical Risk</div>
<svg class="ic" style="left:1741px;top:473.4px" width="7" height="8" viewBox="0 0 7 8" >
<path d="M0 0L6.600 4 0 8z" fill="#2f3a4a"/>
</svg>
<svg class="ic" style="left:1820px;top:468px" width="21" height="11" viewBox="1820 468 21 11" >
<circle cx="1824.6" cy="473.5" r="2.05" fill="#4d7cdb"/>
<circle cx="1830.4499999999998" cy="473.5" r="2.05" fill="#4d7cdb"/>
<circle cx="1836.3" cy="473.5" r="2.05" fill="#4d7cdb"/>
</svg>
<div class="t " style="left:325.60px;top:510.00px;font-size:13.0px;color:#111;transform:scaleY(1.07);transform-origin:0 19.00px;">artifact-scan</div>
<div class="t " style="left:508.00px;top:510.00px;font-size:13.0px;color:#111;transform:scaleY(1.07);transform-origin:0 19.00px;">77c876e-436</div>
<div class="t " style="left:672.40px;top:510.00px;font-size:13.0px;color:#111;transform:scaleY(1.07);transform-origin:0 19.00px;">-</div>
<svg class="ic" style="left:835.3px;top:512px" width="19" height="16" viewBox="835.3 512 19 16" >
<path d="M844.40 514.20L851.30 526.00H837.50Z" fill="none" stroke="#d4545c" stroke-width="1.600" stroke-linejoin="round"/>
<path d="M844.40 518.80v3.300" stroke="#d4545c" stroke-width="1.600" stroke-linecap="round"/>
<circle cx="844.40" cy="524.00" r=".950" fill="#d4545c"/>
</svg>
<div class="t " style="left:857.00px;top:506.00px;font-size:13.0px;color:#111;transform:scaleY(1.07);transform-origin:0 19.00px;">54</div>
<div class="t " style="left:971.60px;top:510.00px;font-size:13.0px;color:#1f7cf0;transform:scaleY(1.07);transform-origin:0 19.00px;">92</div>
<div class="t " style="left:1107.30px;top:510.00px;font-size:13.0px;color:#111;transform:scaleY(1.07);transform-origin:0 19.00px;">Jan 8, 2026</div>
<div class="b vbtn" style="left:1290px;top:509px;width:83px;height:32px;background:#fff;border:1px solid #e8f0f4;border-radius:5px">
</div>
<svg class="ic" style="left:1308px;top:517.9px" width="15.5" height="11.4" viewBox="1308 517.9 15.5 11.4" >
<path d="M1309.70 523.60C1312.72 518.27 1318.78 518.27 1321.80 523.60C1318.78 528.93 1312.72 528.93 1309.70 523.60Z" fill="none" stroke="#111" stroke-width="1.4" stroke-linejoin="round"/>
<circle cx="1315.75" cy="523.60" r="2.32" fill="none" stroke="#111" stroke-width="1.4"/>
</svg>
<div class="t " style="left:1327.80px;top:509.00px;font-size:13.0px;color:#111;transform:scaleY(1.07);transform-origin:0 19.00px;letter-spacing:-0.133px;">View</div>
<div class="b vbtn" style="left:1453px;top:509px;width:84px;height:32px;background:#fff;border:1px solid #ebf3f5;border-radius:5px">
</div>
<svg class="ic" style="left:1471.2px;top:517.9px" width="15.3" height="11.4" viewBox="1471.2 517.9 15.3 11.4" >
<path d="M1472.80 523.60C1475.83 518.13 1481.88 518.13 1484.90 523.60C1481.88 529.07 1475.83 529.07 1472.80 523.60Z" fill="none" stroke="#c4c4c4" stroke-width="1.2" stroke-linejoin="round"/>
<circle cx="1478.85" cy="523.60" r="2.38" fill="none" stroke="#c4c4c4" stroke-width="1.2"/>
</svg>
<div class="t " style="left:1491.50px;top:509.00px;font-size:13.0px;color:#c2c2c2;transform:scaleY(1.07);transform-origin:0 19.00px;letter-spacing:-0.167px;">View</div>
<div class="b pill" style="left:1620px;top:509px;width:150px;height:32px;background:#ffd4d4;border-radius:2px">
</div>
<svg class="ic" style="left:1635.9px;top:514.6px" width="19.6" height="19.6" viewBox="1635.9 514.6 19.6 19.6" >
<polygon points="1642.06,515.60 1649.34,515.60 1654.50,520.76 1654.50,528.04 1649.34,533.20 1642.06,533.20 1636.90,528.04 1636.90,520.76" fill="#8f2424"/>
<path d="M1645.70 519.80v5.200" stroke="#fff" stroke-width="2.300" stroke-linecap="round"/>
<circle cx="1645.70" cy="528.90" r="1.350" fill="#fff"/>
</svg>
<div class="t " style="left:1662.60px;top:510.00px;font-size:13.0px;color:#8a2626;transform:scaleY(1.07);transform-origin:0 19.00px;letter-spacing:-0.017px;">Critical Risk</div>
<svg class="ic" style="left:1741px;top:520.4px" width="7" height="8" viewBox="0 0 7 8" >
<path d="M0 0L6.600 4 0 8z" fill="#2f3a4a"/>
</svg>
<svg class="ic" style="left:1820px;top:515px" width="21" height="11" viewBox="1820 515 21 11" >
<circle cx="1824.6" cy="520.5" r="2.05" fill="#4d7cdb"/>
<circle cx="1830.4499999999998" cy="520.5" r="2.05" fill="#4d7cdb"/>
<circle cx="1836.3" cy="520.5" r="2.05" fill="#4d7cdb"/>
</svg>
<div class="t " style="left:325.60px;top:557.00px;font-size:13.0px;color:#111;transform:scaleY(1.07);transform-origin:0 19.00px;">supplychain-api</div>
<div class="t " style="left:508.00px;top:557.00px;font-size:13.0px;color:#111;transform:scaleY(1.07);transform-origin:0 19.00px;">c36fb0e-1704</div>
<div class="t " style="left:672.40px;top:557.00px;font-size:13.0px;color:#111;transform:scaleY(1.07);transform-origin:0 19.00px;">-</div>
<svg class="ic" style="left:835.3px;top:559px" width="19" height="16" viewBox="835.3 559 19 16" >
<path d="M844.40 561.20L851.30 573.00H837.50Z" fill="none" stroke="#d4545c" stroke-width="1.600" stroke-linejoin="round"/>
<path d="M844.40 565.80v3.300" stroke="#d4545c" stroke-width="1.600" stroke-linecap="round"/>
<circle cx="844.40" cy="571.00" r=".950" fill="#d4545c"/>
</svg>
<div class="t " style="left:857.00px;top:553.00px;font-size:13.0px;color:#111;transform:scaleY(1.07);transform-origin:0 19.00px;">6</div>
<div class="t " style="left:971.60px;top:557.00px;font-size:13.0px;color:#1f7cf0;transform:scaleY(1.07);transform-origin:0 19.00px;">4</div>
<div class="t " style="left:1107.30px;top:557.00px;font-size:13.0px;color:#111;transform:scaleY(1.07);transform-origin:0 19.00px;">Jan 6, 2026</div>
<div class="b vbtn" style="left:1290px;top:556px;width:83px;height:32px;background:#fff;border:1px solid #e8f0f4;border-radius:5px">
</div>
<svg class="ic" style="left:1308px;top:564.9px" width="15.5" height="11.4" viewBox="1308 564.9 15.5 11.4" >
<path d="M1309.70 570.60C1312.72 565.27 1318.78 565.27 1321.80 570.60C1318.78 575.93 1312.72 575.93 1309.70 570.60Z" fill="none" stroke="#111" stroke-width="1.4" stroke-linejoin="round"/>
<circle cx="1315.75" cy="570.60" r="2.32" fill="none" stroke="#111" stroke-width="1.4"/>
</svg>
<div class="t " style="left:1327.80px;top:556.00px;font-size:13.0px;color:#111;transform:scaleY(1.07);transform-origin:0 19.00px;letter-spacing:-0.133px;">View</div>
<div class="b vbtn" style="left:1453px;top:556px;width:84px;height:32px;background:#fff;border:1px solid #ebf3f5;border-radius:5px">
</div>
<svg class="ic" style="left:1471.2px;top:564.9px" width="15.3" height="11.4" viewBox="1471.2 564.9 15.3 11.4" >
<path d="M1472.80 570.60C1475.83 565.13 1481.88 565.13 1484.90 570.60C1481.88 576.07 1475.83 576.07 1472.80 570.60Z" fill="none" stroke="#c4c4c4" stroke-width="1.2" stroke-linejoin="round"/>
<circle cx="1478.85" cy="570.60" r="2.38" fill="none" stroke="#c4c4c4" stroke-width="1.2"/>
</svg>
<div class="t " style="left:1491.50px;top:556.00px;font-size:13.0px;color:#c2c2c2;transform:scaleY(1.07);transform-origin:0 19.00px;letter-spacing:-0.167px;">View</div>
<div class="b pill" style="left:1620px;top:556px;width:150px;height:32px;background:#ffd4d4;border-radius:2px">
</div>
<svg class="ic" style="left:1635.9px;top:561.6px" width="19.6" height="19.6" viewBox="1635.9 561.6 19.6 19.6" >
<polygon points="1642.06,562.60 1649.34,562.60 1654.50,567.76 1654.50,575.04 1649.34,580.20 1642.06,580.20 1636.90,575.04 1636.90,567.76" fill="#8f2424"/>
<path d="M1645.70 566.80v5.200" stroke="#fff" stroke-width="2.300" stroke-linecap="round"/>
<circle cx="1645.70" cy="575.90" r="1.350" fill="#fff"/>
</svg>
<div class="t " style="left:1662.60px;top:557.00px;font-size:13.0px;color:#8a2626;transform:scaleY(1.07);transform-origin:0 19.00px;letter-spacing:-0.017px;">Critical Risk</div>
<svg class="ic" style="left:1741px;top:567.4px" width="7" height="8" viewBox="0 0 7 8" >
<path d="M0 0L6.600 4 0 8z" fill="#2f3a4a"/>
</svg>
<svg class="ic" style="left:1820px;top:562px" width="21" height="11" viewBox="1820 562 21 11" >
<circle cx="1824.6" cy="567.5" r="2.05" fill="#4d7cdb"/>
<circle cx="1830.4499999999998" cy="567.5" r="2.05" fill="#4d7cdb"/>
<circle cx="1836.3" cy="567.5" r="2.05" fill="#4d7cdb"/>
</svg>
<div class="b hl" style="left:1281px;top:317px;width:102px;height:282px;border:5px solid #ffc60b">
</div>
<div class="t " style="left:325.70px;top:600.00px;font-size:11.0px;color:#333;transform:scaleY(1.07);transform-origin:0 19.00px;letter-spacing:0.143px;">Per page</div>
<div class="b sel" style="left:374px;top:605px;width:42px;height:20px;border:1px solid #5b9bf8;border-radius:3px;background:#fff">
</div>
<div class="t " style="left:379.00px;top:600.00px;font-size:11.0px;color:#a9a4ee;transform:scaleY(1.07);transform-origin:0 19.00px;">5</div>
<svg class="ic" style="left:400px;top:612px" width="11" height="7" viewBox="0 0 11 7" >
<path d="M1 1l4.500 4.500L10 1" fill="none" stroke="#5b9bf8" stroke-width="1.600" stroke-linecap="round" stroke-linejoin="round"/>
</svg>
<div class="t " style="left:419.80px;top:600.00px;font-size:11.0px;color:#333;transform:scaleY(1.07);transform-origin:0 19.00px;letter-spacing:0.095px;">Showing 1 to 5 of 69</div>
<div class="b pg" style="left:1569.2px;top:608px;width:37.6px;height:21px;background:#f8f8f8;border-radius:5px">
</div>
<svg class="ic" style="left:1582.1px;top:612.15px" width="16" height="12" viewBox="1582.1 612.15 16 12" >
<path d="M1594.20 614.95l-3.40 3.200l3.40 3.200M1589.50 614.95l-3.40 3.200l3.40 3.200" fill="none" stroke="#bdbdbd" stroke-width="1.2" stroke-linecap="round" stroke-linejoin="round"/>
</svg>
<div class="b pg" style="left:1609.2px;top:608px;width:33.8px;height:21px;background:#f8f8f8;border-radius:5px">
</div>
<svg class="ic" style="left:1620.1px;top:612.15px" width="16" height="12" viewBox="1620.1 612.15 16 12" >
<path d="M1629.80 614.95l-3.40 3.200l3.40 3.200" fill="none" stroke="#bdbdbd" stroke-width="1.2" stroke-linecap="round" stroke-linejoin="round"/>
</svg>
<div class="b pg" style="left:1650.1px;top:608px;width:28.8px;height:21px;background:#5fa1fb;border-radius:5px">
</div>
<div class="t " style="left:1661.00px;top:603.00px;font-size:12.0px;color:#fff;transform:scaleY(1.07);transform-origin:0 19.00px;font-weight:700;">1</div>
<div class="b pg" style="left:1683.2px;top:608px;width:28.7px;height:21px;background:#f1f1f1;border-radius:5px">
</div>
<div class="t " style="left:1694.55px;top:603.00px;font-size:12.0px;color:#333;transform:scaleY(1.07);transform-origin:0 19.00px;">2</div>
<div class="b pg" style="left:1717px;top:608px;width:28.7px;height:21px;background:#f1f1f1;border-radius:5px">
</div>
<div class="t " style="left:1728.35px;top:603.00px;font-size:12.0px;color:#333;transform:scaleY(1.07);transform-origin:0 19.00px;">3</div>
<div class="b pg" style="left:1750px;top:608px;width:29px;height:21px;background:#f1f1f1;border-radius:5px">
</div>
<div class="t " style="left:1761.00px;top:603.00px;font-size:12.0px;color:#333;transform:scaleY(1.07);transform-origin:0 19.00px;">4</div>
<div class="b pg" style="left:1784px;top:608px;width:28.8px;height:21px;background:#f1f1f1;border-radius:5px">
</div>
<div class="t " style="left:1795.40px;top:603.00px;font-size:12.0px;color:#333;transform:scaleY(1.07);transform-origin:0 19.00px;">5</div>
<div class="b pg" style="left:1817.1px;top:608px;width:29.7px;height:21px;background:#f1f1f1;border-radius:5px">
</div>
<svg class="ic" style="left:1824.25px;top:612.15px" width="16" height="12" viewBox="1824.25 612.15 16 12" >
<path d="M1830.55 614.95l3.40 3.200l-3.40 3.200" fill="none" stroke="#333" stroke-width="1.5" stroke-linecap="round" stroke-linejoin="round"/>
</svg>
<div class="b pg" style="left:1851.1px;top:608px;width:33.8px;height:21px;background:#f1f1f1;border-radius:5px">
</div>
<svg class="ic" style="left:1861.0px;top:612.15px" width="16" height="12" viewBox="1861.0 612.15 16 12" >
<path d="M1864.90 614.95l3.40 3.200l-3.40 3.200M1869.60 614.95l3.40 3.200l-3.40 3.200" fill="none" stroke="#333" stroke-width="1.5" stroke-linecap="round" stroke-linejoin="round"/>
</svg>
</main>
</body>
</html>
